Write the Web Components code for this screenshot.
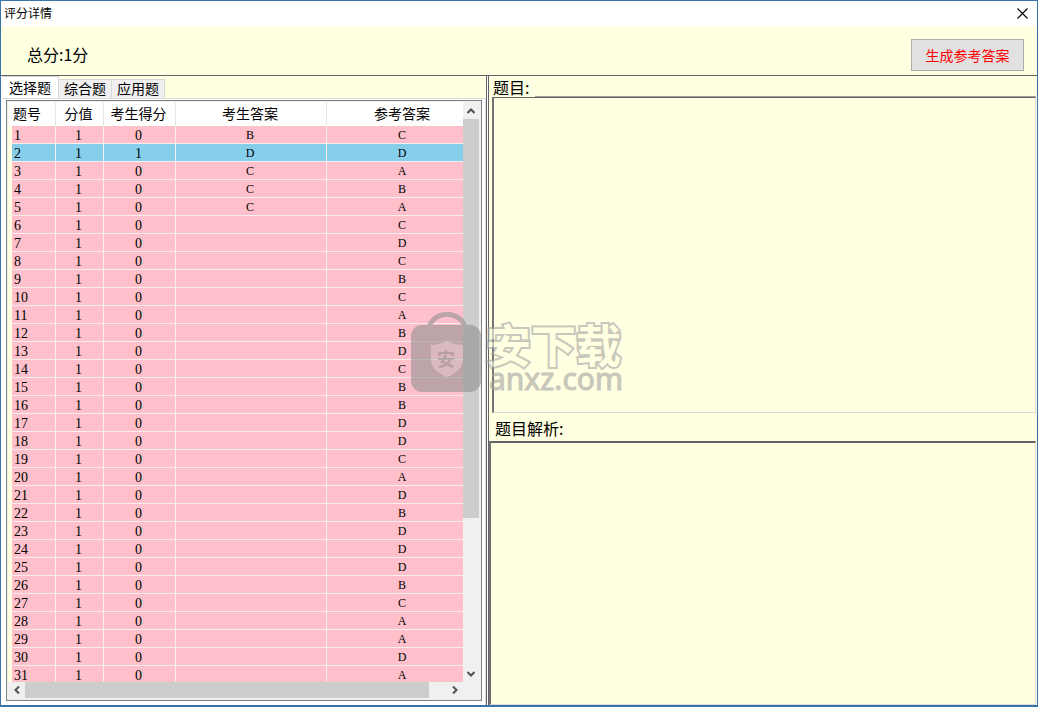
<!DOCTYPE html>
<html lang="zh-CN">
<head>
<meta charset="utf-8">
<title>评分详情</title>
<style>
  body { margin: 0; font-family: "Noto Sans CJK SC", "Liberation Sans", sans-serif; color: #000; }
</style>
</head>
<body>
<score-window></score-window>

<template id="t-window">
  <style>
    :host { display: flex; flex-direction: column; box-sizing: border-box; height: 100vh; min-height: 400px; position: relative;
      border: 1px solid #3b75a8; border-bottom-width: 2px; background: #ffffe1; overflow: hidden; }
    main { flex: 1; min-height: 0; display: grid; grid-template-columns: 486fr 550fr; grid-template-rows: 100%; border-top: 1px solid #646464; }
  </style>
  <title-bar>评分详情</title-bar>
  <score-header></score-header>
  <main>
    <answer-pane></answer-pane>
    <detail-pane></detail-pane>
  </main>
  <site-mark></site-mark>
</template>

<template id="t-title">
  <style>
    :host { display: flex; height: 25px; flex: none; align-items: center; justify-content: space-between; background: #fff; padding: 0 8px 0 3px; font-size: 12px; line-height: 24px; }
    span { padding-bottom: 2px; }
    button { border: 0; padding: 0; background: none; width: 13px; height: 13px; display: flex; align-items: center; justify-content: center; }
  </style>
  <span><slot></slot></span>
  <button aria-label="关闭"><svg width="11" height="11" viewBox="0 0 11 11"><path d="M.5.5l10 10M10.5.5l-10 10" stroke="#000" stroke-width="1.1"/></svg></button>
</template>

<template id="t-header">
  <style>
    :host { display: flex; height: 49px; flex: none; align-items: center; justify-content: space-between; box-sizing: border-box; padding: 8px 13px 0 26px; }
    span { font-size: 16px; line-height: 24px; padding-bottom: 2px; }
    button { width: 113px; height: 32px; padding: 0; border: 1px solid #adadad; background: #e1e1e1; color: #f00; font: 14px/20px "Noto Sans CJK SC", sans-serif; }
  </style>
  <span>总分:1分</span>
  <button>生成参考答案</button>
</template>

<template id="t-answers">
  <style>
    :host { display: flex; flex-direction: column; min-height: 0; min-width: 0; box-sizing: border-box; border-left: 1px solid #fff; border-right: 1px solid #646464; }
    .tabs { display: flex; align-items: flex-end; height: 22px; flex: none; }
    .tabs button { font: 14px/16px "Noto Sans CJK SC", sans-serif; color: #000; height: 19px; width: 53px; padding: 0 0 2px; border: 1px solid #d9d9d9; border-bottom: 0; border-left: 0; background: #f0f0f0; }
    .tabs button[aria-selected=true] { height: 22px; width: 57px; background: #fff; }
    .page { flex: 1; min-height: 0; display: flex; background: #fff; border-top: 1px solid #dcdcdc; padding: 1px 3px 4px 4px; border-right: 1px solid #dcdcdc; }
    answer-table { flex: 1; }
  </style>
  <div class="tabs" role="tablist">
    <button role="tab" aria-selected="true">选择题</button><button role="tab">综合题</button><button role="tab">应用题</button>
  </div>
  <div class="page"><answer-table></answer-table></div>
</template>

<template id="t-table">
  <style>
    :host { display: grid; grid-template: minmax(0, 1fr) 16px / minmax(0, 1fr) 16px; min-width: 0; border: 1px solid #808080; padding: 1px 2px 2px 1px; background: #f0f0f0; }
    .view { overflow: hidden; background: #ffffe1; }
    table { border-collapse: separate; border-spacing: 0; table-layout: fixed; width: 470px; }
    th, td { box-sizing: border-box; text-align: center; font-weight: 400; border-right: 1px solid #f5eeee; white-space: nowrap; }
    th { height: 24px; padding: 0 2px 2px 0; font-size: 14px; line-height: 22px; background: #fff; border-right-color: #e5e5e5; }
    td { height: 18px; padding: 2px 2px 0 0; font: 14px/15px "Liberation Serif", serif; background: #ffc0cb; border-bottom: 1px solid #f5eeee; }
    td.letter { font-size: 12px; }
    tr.right td { background: #87ceeb; }
    th:last-child, td:last-child { padding-right: 0; }
    th:first-child { text-align: left; padding-left: 5px; }
    td:first-child { text-align: left; padding-left: 2px; border-left: 4px solid #ffffe1; }
  </style>
  <div class="view">
    <table>
      <colgroup><col style="width:48px"><col style="width:48px"><col style="width:72px"><col style="width:151px"><col style="width:151px"></colgroup>
      <thead><tr><th>题号</th><th>分值</th><th>考生得分</th><th>考生答案</th><th>参考答案</th></tr></thead>
      <tbody></tbody>
    </table>
  </div>
  <scroll-rail></scroll-rail>
  <scroll-rail horizontal></scroll-rail>
</template>

<template id="t-rail">
  <style>
    :host { display: flex; flex-direction: column; background: #f0f0f0; min-width: 0; min-height: 0; }
    :host([horizontal]) { flex-direction: row; }
    .arrow { flex: none; width: 16px; height: 17px; display: flex; align-items: center; justify-content: center; }
    :host([horizontal]) .arrow { width: 17px; height: 16px; }
    .arrow svg { width: 8px; height: 8px; }
    .track { flex: 1; min-width: 0; min-height: 0; }
    .thumb { background: #cdcdcd; width: 100%; height: 73%; }
    :host([horizontal]) .thumb { width: 96%; height: 100%; }
    :host([horizontal]) svg { transform: rotate(-90deg); }
    path { fill: none; stroke: #505050; stroke-width: 2; }
  </style>
  <div class="arrow"><svg viewBox="0 0 8 8"><path d="M.5 6L4 2.5 7.500 6"/></svg></div>
  <div class="track"><div class="thumb"></div></div>
  <div class="arrow"><svg viewBox="0 0 8 8"><path d="M.5 2L4 5.500 7.500 2"/></svg></div>
</template>

<template id="t-detail">
  <style>
    :host { display: flex; flex-direction: column; min-width: 0; min-height: 0; box-sizing: border-box; border-left: 1px solid #fff; padding: 0 1px 0 0; }
    section { display: flex; flex-direction: column; min-height: 0; border-left: 1px solid #646464; }
    .question { flex: 337 1 0; padding-left: 3px; }
    .analysis { flex: 292 1 0; }
    .head { display: flex; flex: none; font-size: 16px; line-height: 22px; height: 21px; }
    .question .head { padding-left: 1px; }
    .question .head::after { content: ""; flex: 1; margin-left: 6px; border-bottom: 1px solid #a0a0a0; box-sizing: border-box; }
    .analysis .head { height: 28px; line-height: 30px; padding-left: 6px; }
    textarea { flex: 1; min-height: 0; box-sizing: border-box; display: block; width: 100%; resize: none; margin: 0; outline: 0; background: #ffffe1; border-radius: 0;
      border: 1px solid #dcdcdc; border-top-color: #646464; border-left: 2px solid #737373; font: 14px/20px "Noto Sans CJK SC", sans-serif; }
    .analysis textarea { border-top-width: 2px; }
  </style>
  <section class="question">
    <div class="head"><label for="q">题目:</label></div>
    <textarea id="q" readonly></textarea>
  </section>
  <section class="analysis">
    <div class="head"><label for="a">题目解析:</label></div>
    <textarea id="a" readonly></textarea>
  </section>
</template>

<template id="t-mark">
  <style>
    :host { position: absolute; left: 410px; top: 311px; display: flex; gap: 5px; pointer-events: none; opacity: .6; }
    .bag { position: relative; width: 70px; height: 80px; }
    .bag span { position: absolute; left: 0; right: 0; top: 36px; text-align: center; font-weight: 700; font-size: 18px; line-height: 20px; color: #888; }
    .words { display: flex; flex-direction: column; padding-top: 12px; }
    .cn { font-size: 45px; line-height: 40px; height: 44px; font-weight: 700; color: #ffffe1; -webkit-text-stroke: 4px #a3a3a3; paint-order: stroke fill; }
    .en { font: 400 30px/22px "Noto Sans", sans-serif; color: #a3a3a3; -webkit-text-stroke: 1px #a3a3a3; padding-left: 3px; }
  </style>
  <div class="bag">
    <svg width="70" height="80" viewBox="0 0 70 80">
      <path d="M18 15C24-2 48-2 54 15" fill="none" stroke="#929292" stroke-width="5"/>
      <rect y="13" width="70" height="67" rx="11" fill="#929292"/>
      <path d="M36 29Q28 33 20 33V48Q21 59 36 65Q51 59 52 48V33Q44 33 36 29Z" fill="#c4b6b9"/>
    </svg>
    <span>安</span>
  </div>
  <div class="words"><div class="cn">安下载</div><div class="en">anxz.com</div></div>
</template>

<script>
  const define = (name, templateId, setup) => customElements.define(name, class extends HTMLElement {
    constructor() {
      super();
      const root = this.attachShadow({ mode: "open" });
      root.append(document.getElementById(templateId).content.cloneNode(true));
      if (setup) setup(root);
    }
  });

  const reference = "CDABACDCBCABDCBBDDCADBDDDBCAADA";
  const given = "BDCCC";

  define("scroll-rail", "t-rail");
  define("answer-table", "t-table", root => {
    const body = root.querySelector("tbody");
    [...reference].forEach((ref, i) => {
      const mine = given[i] || "";
      const row = body.insertRow();
      const right = mine === ref;
      if (right) row.className = "right";
      [i + 1, 1, right ? 1 : 0, mine, ref].forEach((value, col) => {
        const cell = row.insertCell();
        cell.textContent = value;
        if (col > 2) cell.className = "letter";
      });
    });
  });
  define("title-bar", "t-title");
  define("score-header", "t-header");
  define("answer-pane", "t-answers");
  define("detail-pane", "t-detail");
  define("site-mark", "t-mark");
  define("score-window", "t-window");
</script>
</body>
</html>
